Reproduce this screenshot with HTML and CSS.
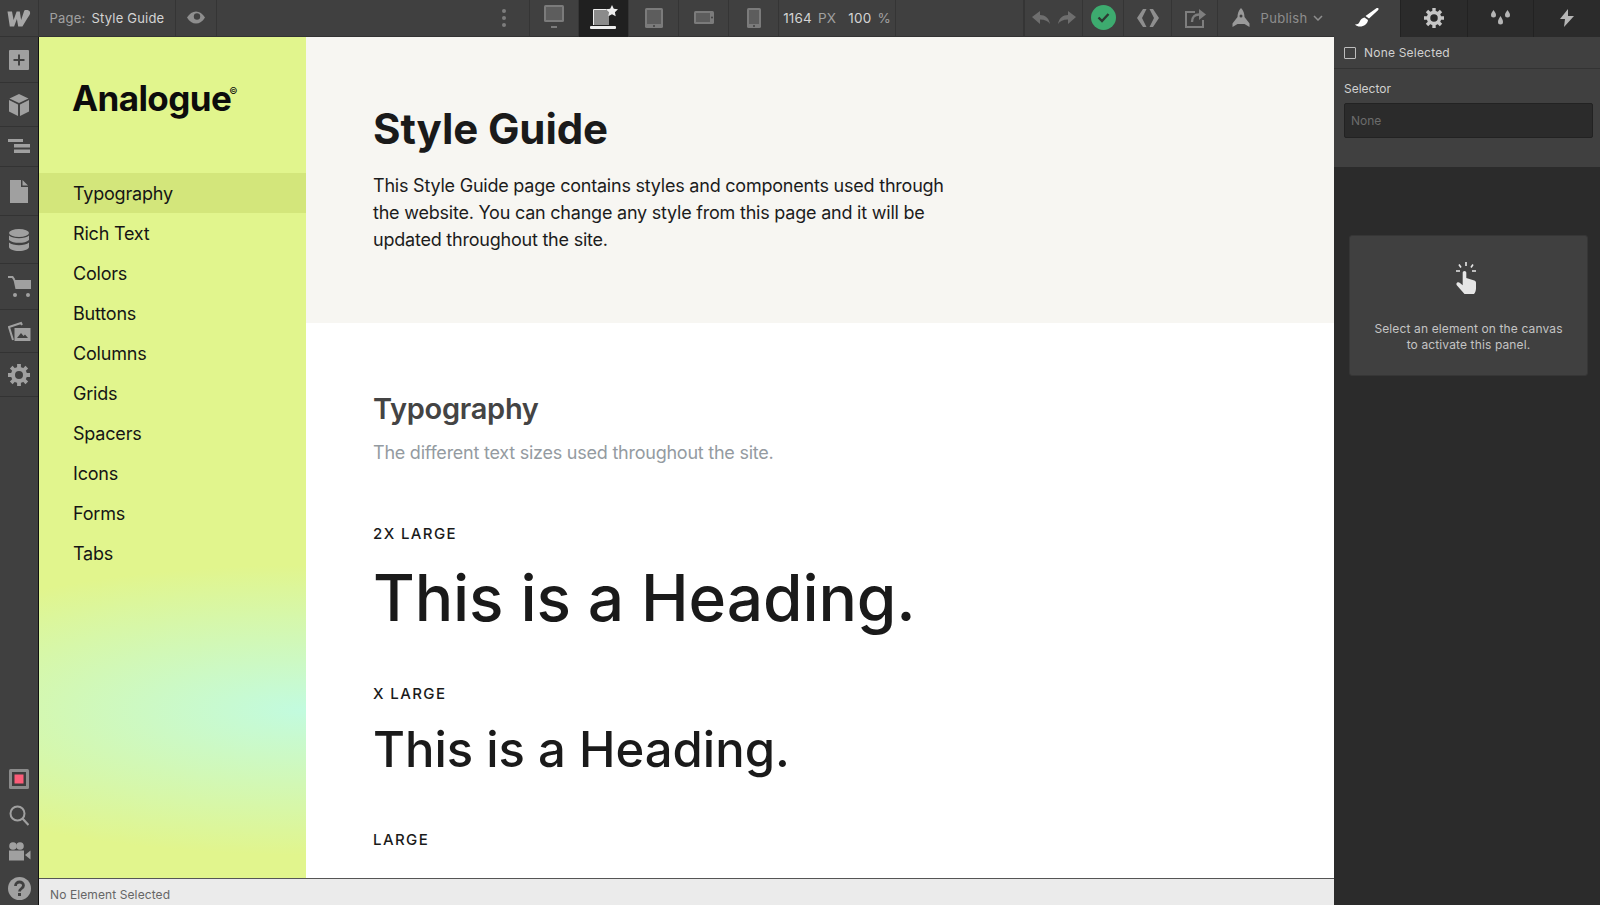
FILE: index.html
```html
<!DOCTYPE html>
<html lang="en">
<head>
<meta charset="utf-8">
<title>Style Guide</title>
<link rel="stylesheet" href="styles.css">
</head>
<body>
<div class="app">
  <header class="topbar">
    <div class="cell w-logo"><svg class="ic" width="24" height="18" viewBox="0 0 24 18"><path fill="#a6a6a6" d="M0.5 2.500h4.500l1.600 8.500 3-8.500h3.200l1.300 8.500 3.200-9.500c1.800-1 5-.4 5.700 1.400.7 1.900-1 4-2.600 6.300l-5 8.300h-4.200l-1.300-7.500-2.800 7.500h-4.300z"/></svg></div>
    <div class="cell w-page"><span class="muted">Page:</span><span class="light">Style Guide</span></div>
    <div class="cell w-eye"><svg width="18" height="13" viewBox="0 0 18 13"><path fill="#8e8e8e" d="M0 6.500C2.500 2.500 5.500.5 9 .5s6.500 2 9 6c-2.500 4-5.500 6-9 6s-6.500-2-9-6z"/><circle cx="10" cy="5.500" r="3.200" fill="#404040"/></svg></div>
    <div class="cell dots"><i></i><i></i><i></i></div>
    <div class="cell w-dev first-dev"><svg width="22" height="28" viewBox="0 0 22 28"><rect x="1" y="1" width="20" height="17" rx="1.500" fill="#7b7b7b"/><rect x="3" y="3" width="16" height="13" fill="#5d5d5d"/><rect x="8" y="22" width="6" height="2" fill="#7b7b7b"/></svg></div>
    <div class="cell w-dev active"><svg width="30" height="28" viewBox="0 0 30 28"><path fill="#8b8b8b" d="M5 5h15v16H5z"/><path fill="none" stroke="#eee" d="M4.500 21V5.500H17"/><rect x="1" y="22" width="26" height="3" rx="1" fill="#eee"/><path fill="#eee" d="M23 1l1.800 3.800 4.200.5-3.100 2.900.8 4.100-3.700-2-3.700 2 .8-4.100L17 5.300l4.200-.5z"/></svg></div>
    <div class="cell w-dev"><svg width="20" height="22" viewBox="0 0 20 22"><rect x="1" y="1" width="18" height="20" rx="1.500" fill="#7b7b7b"/><rect x="3" y="3" width="14" height="14" fill="#5d5d5d"/><circle cx="10" cy="19" r="1" fill="#404040"/></svg></div>
    <div class="cell w-dev"><svg width="22" height="16" viewBox="0 0 22 16"><rect x="1" y="1" width="20" height="13" rx="1.500" fill="#7b7b7b"/><rect x="3" y="3" width="14" height="9" fill="#5d5d5d"/><circle cx="19" cy="7.500" r="1" fill="#404040"/></svg></div>
    <div class="cell w-dev"><svg width="16" height="22" viewBox="0 0 16 22"><rect x="1" y="1" width="14" height="20" rx="1.500" fill="#7b7b7b"/><rect x="3" y="3" width="10" height="14" fill="#5d5d5d"/><circle cx="8" cy="19" r="1" fill="#404040"/></svg></div>
    <div class="cell w-size"><span class="light">1164</span><span class="muted">PX</span><span class="light gap">100</span><span class="muted">%</span></div>
    <div class="cell grow"></div>
    <div class="cell w-undo"><svg width="44" height="16" viewBox="0 0 44 16"><path fill="#6e6e6e" d="M0 7l8-6v4c5 0 9 3 10 9-2-3-5-4.500-10-4.500V14zM44 7l-8-6v4c-5 0-9 3-10 9 2-3 5-4.500 10-4.500V14z"/></svg></div>
    <div class="cell w-check"><svg width="25" height="25" viewBox="0 0 25 25"><circle cx="12.500" cy="12.500" r="12.500" fill="#3dab6f"/><path fill="none" stroke="#2d3a33" stroke-width="2.400" d="M7.500 12.500l3.500 3.500 6.500-7"/></svg></div>
    <div class="cell w-code"><svg width="24" height="18" viewBox="0 0 24 18"><path fill="#8e8e8e" d="M7 0h3.500L6 9l4.500 9H7L1 9zM17 0h-3.500L18 9l-4.500 9H17l6-9z"/></svg></div>
    <div class="cell w-share"><svg width="22" height="20" viewBox="0 0 22 20"><path fill="none" stroke="#7e7e7e" stroke-width="2" d="M11 4H2v15h17v-7"/><path fill="none" stroke="#7e7e7e" stroke-width="2.400" d="M8 14c0-5 3-7.500 7-7.500"/><path fill="#7e7e7e" d="M15 1l7 5.500-7 5.500z"/></svg></div>
    <div class="cell w-publish"><svg class="rocket" width="20" height="20" viewBox="0 0 20 20"><path fill="#9a9a9a" d="M10 0c2.500 2.500 3.500 6 3.500 9l5 6.500V19l-5-3H6.500l-5 3v-3.500l5-6.500C6.500 6 7.500 2.500 10 0z"/><circle cx="10" cy="8" r="1.500" fill="#404040"/></svg><span class="publish">Publish</span><svg width="10" height="6" viewBox="0 0 10 6"><path fill="none" stroke="#8e8e8e" stroke-width="1.500" d="M1 1l4 4 4-4"/></svg></div>
    <nav class="tabs">
      <div class="tab on"><svg width="24" height="20" viewBox="0 0 24 20"><path fill="#fff" d="M23 0c.8.700.8 1.500 0 2.300l-9 8.200-3.500-2.500L21 .4c.8-.5 1.400-.7 2-.4zM9.500 9.500l3.500 2.500c-.5 4-4 6.500-8 6.500-2 0-3.500-.5-5-2 3 0 4-1 5-3.500.8-2 2.500-3 4.500-3.500z"/></svg></div>
      <div class="tab"><svg width="20" height="20" viewBox="0 0 20 20"><circle cx="10" cy="10" r="5.500" fill="none" stroke="#c6c6c6" stroke-width="3.500"/><path stroke="#c6c6c6" stroke-width="3.400" d="M10 0v4M10 16v4M0 10h4M16 10h4M3 3l2.800 2.800M14.200 14.200L17 17M3 17l2.800-2.800M14.200 5.800L17 3"/></svg></div>
      <div class="tab"><svg width="21" height="18" viewBox="0 0 21 18"><path fill="#b5b5b5" d="M3.500 1C5 3 6 4.500 6 6a2.500 2.500 0 0 1-5 0c0-1.500 1-3 2.500-5zM17.500 1C19 3 20 4.500 20 6a2.500 2.500 0 0 1-5 0c0-1.500 1-3 2.500-5zM10.500 7C12 9.500 13 11 13 13a2.500 2.500 0 0 1-5 0c0-2 1-3.500 2.500-6z"/></svg></div>
      <div class="tab"><svg width="14" height="18" viewBox="0 0 14 18"><path fill="#b5b5b5" d="M8 0L0 10h5l-1 8 10-11H8z"/></svg></div>
    </nav>
  </header>

  <div class="workspace">
    <aside class="rail">
      <div class="rail-top">
        <div class="slot h46"><svg width="20" height="20" viewBox="0 0 20 20"><rect width="20" height="20" rx="1" fill="#a0a0a0"/><path stroke="#404040" stroke-width="2" d="M10 4.500v11M4.500 10h11"/></svg></div>
        <div class="slot h44"><svg width="20" height="22" viewBox="0 0 20 22"><path fill="#a0a0a0" d="M10 0l9.500 4.500L10 9 .5 4.500zM0 6l9 4.500V22l-9-4.500zM20 6l-9 4.500V22l9-4.500z"/></svg></div>
        <div class="slot h40"><svg width="22" height="15" viewBox="0 0 22 15"><path fill="#a0a0a0" d="M0 0h15v3H0zM6 5h16v3.500H6zM6 10.500h16V14H6z"/></svg></div>
        <div class="slot h49"><svg width="18" height="23" viewBox="0 0 18 23"><path fill="#a0a0a0" d="M0 0h11v7h7v16H0zM12.500 0L18 5.500h-5.500z"/></svg></div>
        <div class="slot h48"><svg width="20" height="22" viewBox="0 0 20 22"><ellipse cx="10" cy="4" rx="10" ry="4" fill="#a0a0a0"/><path fill="#a0a0a0" d="M0 6.500c2 2 6 2.700 10 2.700s8-.7 10-2.700V11c-2 2-6 2.800-10 2.800S2 13 0 11zM0 13.500c2 2 6 2.700 10 2.700s8-.7 10-2.700V18c0 2.200-4.500 4-10 4S0 20.200 0 18z"/></svg></div>
        <div class="slot h46"><svg width="23" height="22" viewBox="0 0 23 22"><path fill="none" stroke="#a0a0a0" stroke-width="2" d="M0 1h4.500l2 3"/><path fill="#a0a0a0" d="M5.500 4H23v9H7.500z"/><circle cx="7" cy="19" r="2" fill="#a0a0a0"/><circle cx="20" cy="19" r="2" fill="#a0a0a0"/></svg></div>
        <div class="slot h43"><svg width="23" height="21" viewBox="0 0 23 21"><path fill="none" stroke="#a0a0a0" stroke-width="2" d="M5 19L1 6l12-4 1 2"/><rect x="6.500" y="7" width="16" height="13" fill="#a0a0a0"/><path fill="#404040" d="M9 17l4-5 2.500 3 1.500-1.500 3 3.500z"/></svg></div>
        <div class="slot h44"><svg width="22" height="22" viewBox="0 0 22 22"><circle cx="11" cy="11" r="6" fill="none" stroke="#a0a0a0" stroke-width="4"/><path stroke="#a0a0a0" stroke-width="3.800" d="M11 0v4M11 18v4M0 11h4M18 11h4M3.200 3.200L6 6M16 16l2.800 2.800M3.200 18.800L6 16M16 6l2.800-2.800"/></svg></div>
      </div>
      <div class="rail-bottom">
        <svg width="20" height="20" viewBox="0 0 20 20"><rect width="20" height="20" rx="1.500" fill="#8b8b8b"/><rect x="3" y="3" width="14" height="14" fill="#3c3c3c"/><rect x="5.500" y="5.500" width="9" height="9" fill="#fb5c78"/></svg>
        <svg width="20" height="21" viewBox="0 0 20 21"><circle cx="8.500" cy="8.500" r="7" fill="none" stroke="#a0a0a0" stroke-width="2"/><path stroke="#a0a0a0" stroke-width="2.200" d="M13.500 13.500L19.500 20"/></svg>
        <svg width="23" height="19" viewBox="0 0 23 19"><circle cx="5" cy="4" r="3.800" fill="#a0a0a0"/><circle cx="12" cy="4" r="3.800" fill="#a0a0a0"/><rect x="1" y="8.500" width="15" height="10" fill="#a0a0a0"/><path fill="#a0a0a0" d="M17 13l5.500-4.500v9z"/></svg>
        <svg width="23" height="23" viewBox="0 0 23 23"><circle cx="11.500" cy="11.500" r="11.500" fill="#a0a0a0"/><path fill="none" stroke="#404040" stroke-width="2.800" d="M7.500 9c0-2.500 2-4 4-4s4 1.300 4 3.500c0 3-4 3-4 6"/><rect x="10" y="16" width="3" height="3" fill="#404040"/></svg>
      </div>
    </aside>

    <div class="stage">
      <div class="canvas">
        <aside class="sidebar">
          <div class="logo">Analogue<sup>©</sup></div>
          <ul class="nav">
            <li class="current">Typography</li>
            <li>Rich Text</li>
            <li>Colors</li>
            <li>Buttons</li>
            <li>Columns</li>
            <li>Grids</li>
            <li>Spacers</li>
            <li>Icons</li>
            <li>Forms</li>
            <li>Tabs</li>
          </ul>
        </aside>
        <main class="content">
          <section class="hero">
            <h1>Style Guide</h1>
            <p>This Style Guide page contains styles and components used through the website. You can change any style from this page and it will be updated throughout the site.</p>
          </section>
          <section class="type">
            <h2>Typography</h2>
            <p class="lede">The different text sizes used throughout the site.</p>
            <div class="label l-2x">2X LARGE</div>
            <div class="h-2x">This is a Heading.</div>
            <div class="label l-x">X LARGE</div>
            <div class="h-x">This is a Heading.</div>
            <div class="label l-l">LARGE</div>
          </section>
        </main>
      </div>
      <footer class="status">No Element Selected</footer>
    </div>

    <aside class="panel">
      <div class="panel-top">
        <div class="selected"><span class="box"></span>None Selected</div>
        <div class="selector">
          <label>Selector</label>
          <div class="input">None</div>
        </div>
      </div>
      <div class="card">
        <svg width="28" height="33" viewBox="0 0 28 33"><path stroke="#e6e6e6" stroke-width="1.600" d="M11 0v4M4 2.500l2 3M18 2.500l-2 3M1 9h4M17 9h4"/><path fill="#e6e6e6" d="M9.500 9c1 0 1.800.7 1.800 1.800V16l8 2.500c1.300.4 1.700 1.200 1.700 2.500v5.500c0 2-1 4.500-2 5.500H9.500L2 23.500c-.8-1-.8-2 0-2.700s2-.6 3 .2l2.700 2.200V10.800C7.700 9.700 8.500 9 9.500 9z"/></svg>
        <p>Select an element on the canvas<br>to activate this panel.</p>
      </div>
    </aside>
  </div>
</div>
</body>
</html>
```

FILE: styles.css
```css
* { box-sizing: border-box; }
html, body { margin: 0; height: 100%; overflow: hidden; }
body { font-family: Inter, "Noto Sans", sans-serif; background: #2b2b2b; color: #111; }
h1, h2, p, ul { margin: 0; padding: 0; }
svg { display: block; flex: none; }

.app { width: 1600px; height: 905px; display: flex; flex-direction: column; }

/* top bar */
.topbar { height: 37px; flex: none; display: flex; background: #404040; font-size: 13px; letter-spacing: .2px; box-shadow: inset 0 -1px 0 #333; }
.cell { height: 36px; padding-bottom: 1px; display: flex; align-items: center; justify-content: center; gap: 6px; border-right: 1px solid #353535; }
.grow { flex: 1; }
.muted { color: #a0a0a0; }
.light { color: #d4d4d4; }
.gap { margin-left: 6px; }
.w-logo { width: 39px; }
.w-page { width: 137px; }
.w-eye { width: 41px; }
.dots { width: 312px; flex-direction: column; gap: 3px; align-items: flex-end; padding-right: 23px; border-right: 0; }
.dots i { width: 4px; height: 4px; border-radius: 50%; background: #7d7d7d; }
.w-dev { width: 50px; }
.first-dev { border-left: 1px solid #353535; }
.active { height: 37px; background: #202020; }
.w-size { width: 117px; font-size: 13.5px; }
.w-undo { width: 59px; border-left: 1px solid #353535; }
.w-check { width: 41px; }
.w-code { width: 48px; }
.w-share { width: 46px; }
.w-publish { width: 116px; border-right: 0; gap: 0; }
.rocket { margin-right: 10px; margin-left: 2px; }
.publish { color: #8e8e8e; margin-right: 6px; font-size: 13px; letter-spacing: .3px; }

.tabs { width: 266px; display: flex; background: #2b2b2b; }
.tab { flex: 1; height: 37px; padding-bottom: 2px; display: flex; align-items: center; justify-content: center; border-left: 1px solid #222; }
.tab.on { background: #404040; border-left: 0; }

/* workspace */
.workspace { flex: 1; min-height: 0; display: flex; }

.rail { width: 39px; flex: none; background: #404040; border-right: 1px solid #111; display: flex; flex-direction: column; justify-content: space-between; padding-bottom: 5px; }
.slot { display: flex; align-items: center; justify-content: center; border-bottom: 1px solid #333; }
.h40 { height: 40px; }
.h43 { height: 43px; }
.h44 { height: 44px; }
.h46 { height: 46px; }
.h48 { height: 48px; }
.h49 { height: 49px; }
.rail-bottom { display: flex; flex-direction: column; align-items: center; gap: 16px; }

.stage { flex: 1; min-width: 0; display: flex; flex-direction: column; }
.canvas { flex: 1; min-height: 0; display: flex; overflow: hidden; background: #fff; }

/* sidebar */
.sidebar {
  width: 267px; flex: none;
  background:
    radial-gradient(ellipse 480px 145px at 100% 673px, #c2fbdf 0%, rgba(194, 251, 223, .6) 40%, rgba(194, 251, 223, 0) 100%),
    #e1f58d;
}
.logo { height: 136px; padding: 39px 0 0 33px; font-size: 35px; line-height: 44px; font-weight: 700; letter-spacing: -.6px; color: #0c0c0c; }
.logo sup { margin-left: -2px; font-size: 9px; font-weight: 500; line-height: 0; vertical-align: 17px; letter-spacing: 0; }
.nav { list-style: none; }
.nav li { height: 40px; padding-left: 34px; font-size: 18px; line-height: 41px; letter-spacing: -.2px; color: #151515; }
.nav .current { background: #d3e67b; }

/* content */
.content { flex: 1; min-width: 0; }
.hero { height: 286px; padding: 66px 0 0 67px; background: #f7f6f2; }
h1 { font-size: 42px; line-height: 52px; font-weight: 700; letter-spacing: -.1px; color: #1a1a1a; }
.hero p { width: 575px; margin-top: 17px; font-size: 18px; line-height: 27px; letter-spacing: -.22px; color: #1c1c1c; }
.type { padding: 68px 0 0 67px; }
h2 { font-size: 29px; line-height: 36px; font-weight: 600; letter-spacing: -.3px; color: #444; }
.lede { margin-top: 13px; font-size: 18px; line-height: 26px; letter-spacing: -.24px; color: #949ba1; }
.label { font-size: 15px; line-height: 20px; font-weight: 500; letter-spacing: 1.4px; color: #1a1a1a; }
.l-2x { margin-top: 58px; }
.h-2x { margin-top: 14px; font-size: 64px; line-height: 80px; font-weight: 500; letter-spacing: -.1px; color: #1a1a1a; }
.l-x { margin-top: 46px; }
.h-x { margin-top: 14px; font-size: 49px; line-height: 64px; font-weight: 500; color: #1a1a1a; }
.l-l { margin-top: 48px; }

.status { height: 27px; flex: none; padding: 7px 0 0 11px; background: #ebebeb; border-top: 1px solid #555; font-size: 12px; line-height: 18px; letter-spacing: .1px; color: #666; }

/* right panel */
.panel { width: 266px; flex: none; background: #2b2b2b; }
.panel-top { height: 130px; background: #404040; color: #d0d0d0; font-size: 12px; }
.selected { height: 32px; display: flex; align-items: center; gap: 8px; padding-left: 10px; border-bottom: 1px solid #333; letter-spacing: .2px; }
.box { width: 12px; height: 12px; border: 1px solid #bdbdbd; border-radius: 1px; }
.selector { padding: 12px 7px 0 10px; }
.selector label { display: block; line-height: 16px; }
.input { height: 35px; margin-top: 6px; padding-left: 6px; background: #2b2b2b; border: 1px solid #222; border-radius: 2px; color: #6c6c6c; line-height: 33px; }
.card { width: 239px; height: 141px; margin: 68px 0 0 15px; padding-top: 26px; display: flex; flex-direction: column; align-items: center; background: #404040; border: 1px solid #363636; border-radius: 3px; }
.card p { margin-top: 26px; font-size: 12px; line-height: 15.5px; letter-spacing: .13px; text-align: center; color: #c4c4c4; }
```
